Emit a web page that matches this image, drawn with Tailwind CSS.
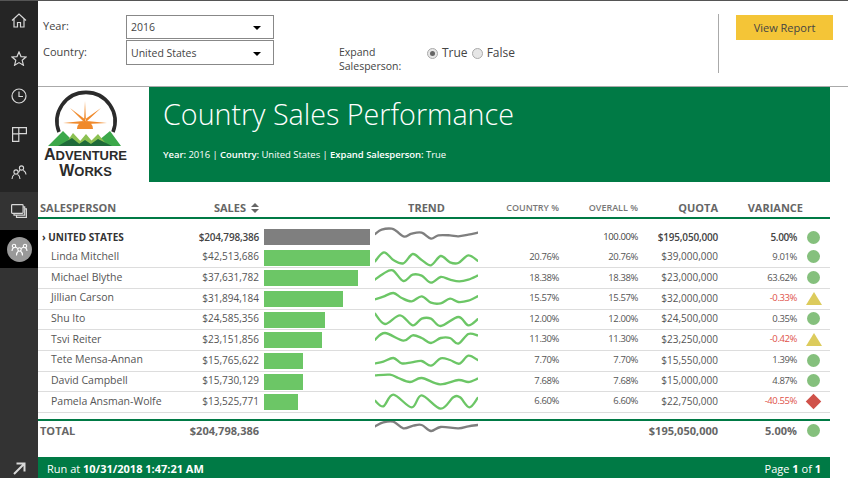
<!DOCTYPE html>
<html lang="en">
<head>
<meta charset="UTF-8">
<title>Country Sales Performance</title>
<script src="https://cdn.jsdelivr.net/npm/@tailwindcss/browser@4"></script>
</head>
<body class="w-[848px] h-[478px] overflow-hidden flex bg-white font-['Open_Sans',sans-serif] text-[#444]">

<!-- left nav -->
<nav class="w-[38px] h-full flex flex-col shrink-0 bg-[#333] text-[#d8d8d8] border-t border-[#555]">
  <div class="bg-[#252525] pb-px">
    <div class="h-[38px] flex items-center justify-center">
      <svg width="16" height="15" viewBox="0 0 16 15" fill="none" stroke="currentColor" stroke-width="1.2"><path d="M1 7.500 8 1l7 6.500M3 6v8h3.500V9.500h3V14H13V6"/></svg>
    </div>
    <div class="h-[38px] flex items-center justify-center">
      <svg width="16" height="15" viewBox="0 0 16 15" fill="none" stroke="currentColor" stroke-width="1.2"><path d="M8 1l2 4.600 5 .4-3.800 3.300 1.200 4.900L8 11.600l-4.400 2.600 1.200-4.900L1 6l5-.4z"/></svg>
    </div>
    <div class="h-[38px] flex items-center justify-center">
      <svg width="16" height="16" viewBox="0 0 16 16" fill="none" stroke="currentColor" stroke-width="1.2"><circle cx="8" cy="8" r="7"/><path d="M8 3.500V8.500H12"/></svg>
    </div>
    <div class="h-[38px] flex items-center justify-center">
      <svg width="15" height="15" viewBox="0 0 15 15" fill="none" stroke="currentColor" stroke-width="1.2"><path d="M.6.6h6.200v6.200H.6zM6.800.6h7.600v6H6.800zM.6 6.800h6.200v7.600H.6z"/></svg>
    </div>
    <div class="h-[38px] flex items-center justify-center">
      <svg width="16" height="15" viewBox="0 0 16 15" fill="none" stroke="currentColor" stroke-width="1.1"><circle cx="5" cy="7" r="2.100"/><circle cx="10.500" cy="3" r="2.100"/><path d="M1 14c0-3 1.500-4 2.400-4.600M6.600 9.400C7.500 10 9 11 9 14M12.300 5.200C13.200 5.800 15 7 15 9.500M7.500 7.500c.5-1 1-1.800 1.400-2.300"/></svg>
    </div>
  </div>
  <div class="h-[38px] flex items-center justify-center">
    <svg width="16" height="14" viewBox="0 0 16 14" fill="none" stroke="currentColor" stroke-width="1.2"><rect x=".6" y=".6" width="11.500" height="8.800" rx=".8"/><path d="M12.100 2.800h1.600v8.300H3V9.400M13.700 4.800h1.700v8.500H5.500v-2.200"/></svg>
  </div>
  <div class="h-[38px] flex items-center justify-center bg-black">
    <div class="w-[25px] h-[25px] rounded-full bg-[#999] flex items-center justify-center">
      <svg width="17" height="13" viewBox="0 0 17 13" fill="none" stroke="white" stroke-width="1.100"><circle cx="3" cy="3" r="1.700"/><circle cx="14" cy="3" r="1.700"/><circle cx="8.500" cy="6.500" r="1.700"/><path d="M4.500 4l2.500 1.600M12.500 4L10 5.600M1 8c0-1.500.6-2.500 1.500-3.200M16 8c0-1.500-.6-2.500-1.500-3.200M5.500 12.500c0-2.500 1-3.800 2-4.500M11.500 12.500c0-2.500-1-3.800-2-4.500"/></svg>
    </div>
  </div>
  <div class="mt-auto h-[17px] flex items-start justify-center">
    <svg width="14" height="14" viewBox="0 0 14 14" fill="none" stroke="currentColor" stroke-width="2"><path d="M2 13 12 3M4.500 2.500h8v8"/></svg>
  </div>
</nav>

<main class="flex-1 flex flex-col min-w-0">

  <!-- parameter bar -->
  <div class="h-[87px] shrink-0 flex border-t border-b border-t-[#555] border-b-[#aaa] text-[11px] text-[#444]">
    <div class="w-[301px] pl-[5px] pt-[13px] grid grid-cols-[83px_148px] grid-rows-[25px_25px] gap-y-px items-center">
      <span>Year:</span>
      <div class="h-[24px] border border-[#888] flex items-center justify-between pl-[4px] pr-[12px] pt-[2px] text-[10.500px]">2016<span class="w-0 h-0 border-x-[4px] border-t-[4px] border-x-transparent border-t-black"></span></div>
      <span>Country:</span>
      <div class="h-[25px] border border-[#888] flex items-center justify-between pl-[4px] pr-[12px] pt-[2px] text-[10.500px]">United States<span class="w-0 h-0 border-x-[4px] border-t-[4px] border-x-transparent border-t-black"></span></div>
    </div>
    <div class="w-[379px] pt-[44px] flex items-start">
      <div class="w-[88px] leading-[14px] text-[10.500px]">Expand<br>Salesperson:</div>
      <div class="flex items-center gap-[4px] text-[12px] leading-[14px] mt-px">
        <span class="w-[11px] h-[11px] rounded-full border border-[#aaa] bg-[#e6e6e6] flex items-center justify-center"><span class="w-[5px] h-[5px] rounded-full bg-[#666]"></span></span>
        <span>True</span>
        <span class="w-[11px] h-[11px] rounded-full border border-[#aaa] bg-[#e6e6e6]"></span>
        <span>False</span>
      </div>
    </div>
    <div class="w-px h-[59px] mt-[13px] bg-[#aaa]"></div>
    <div class="pl-[17px] pt-[14px]">
      <div class="w-[97px] h-[25px] bg-[#f4c537] flex items-center justify-center pt-px text-[#444]">View Report</div>
    </div>
  </div>

  <div class="w-[792px] flex flex-col flex-1 min-h-0">
    <!-- banner -->
    <div class="h-[95px] shrink-0 flex">
      <div class="w-[111px] relative">
        <svg width="111" height="95" viewBox="38 87 111 95" class="absolute inset-0">
          <path d="M59 132A29 29 0 1 1 113 132" fill="none" stroke="#2b2b2b" stroke-width="3.600"/>
          <g fill="#f08a2c">
            <path d="M84 122 85 101 86 122zM84 122 70 108 86 120zM86 122 101 108 84 120zM83 121 63 123 83 124zM87 121 107 123 87 124z"/>
            <path d="M77 129A8 8 0 0 1 93 129z"/>
          </g>
          <path d="M48 146 63 131 78 146zM92 146 110 131 121 146z" fill="#3ca84a"/>
          <path d="M64 146 73 133 85 146zM76 146 86 134 96 146zM86 146 98 134 108 146z" fill="#8cc152"/>
          <path d="M58 146 72 138 82 146zM76 146 85 140 94 146zM88 146 98 139 112 146z" fill="#1f6b3a"/>
        </svg>
        <div class="absolute left-0 w-[95px] top-[60px] text-center text-[#2b2b2b] font-bold font-['Liberation_Sans',sans-serif]">
          <div class="text-[13px] leading-[15px]"><span class="text-[16px] leading-[15px]">A</span>DVENTURE</div>
          <div class="text-[13px] leading-[15px]"><span class="text-[16px] leading-[15px]">W</span>ORKS</div>
        </div>
      </div>
      <div class="flex-1 bg-[#007a45] text-white pl-[14px]">
        <h1 class="text-[28.700px] font-light leading-[40px] mt-[7px]">Country Sales Performance</h1>
        <p class="text-[9.500px] tracking-[-0.050px] mt-[14px] leading-[14px]"><b class="font-semibold">Year:</b> 2016 | <b class="font-semibold">Country:</b> United States | <b class="font-semibold">Expand Salesperson:</b> True</p>
      </div>
    </div>

    <!-- table head -->
    <div class="h-[37px] shrink-0 border-b-2 border-[#007a45] grid grid-cols-[221px_111px_108px_81px_79px_80px_79px_33px] items-end text-right text-[#666] font-bold text-[11px]">
      <div class="flex justify-between pl-[2px] h-[18px] items-center">
        <span>SALESPERSON</span>
        <span class="flex items-center gap-[5px]">SALES
          <span class="flex flex-col gap-[2px]">
            <span class="w-0 h-0 border-x-[4px] border-b-[4px] border-x-transparent border-b-[#666]"></span>
            <span class="w-0 h-0 border-x-[4px] border-t-[4px] border-x-transparent border-t-[#666]"></span>
          </span>
        </span>
      </div>
      <div></div>
      <div class="text-center h-[18px] leading-[18px] pl-[5px]">TREND</div>
      <div class="text-[9px] font-semibold text-[#777] h-[18px] leading-[18px]">COUNTRY %</div>
      <div class="text-[9px] font-semibold text-[#777] h-[18px] leading-[18px]">OVERALL %</div>
      <div class="h-[18px] leading-[18px]">QUOTA</div>
      <div class="h-[18px] leading-[18px] -mr-[6px]">VARIANCE</div>
      <div></div>
    </div>

    <!-- table body -->
    <div class="mt-[8px] flex flex-col text-[10px] text-[#555]">
      <div class="h-[20.670px] grid grid-cols-[221px_111px_108px_81px_79px_80px_79px_33px] items-center text-right font-semibold text-[#444]">
        <div class="flex justify-between pl-[4px]"><span class="font-bold text-[#333]">&rsaquo; UNITED STATES</span><span class="tracking-[-0.200px]">$204,798,386</span></div>
        <div class="pl-[5px] self-start mt-[2px]"><div class="w-[106px] h-[16px] bg-[#7f7f7f]"></div></div>
        <div class="pl-[5px] self-start h-0"><svg class="block" data-spark="12" data-color="#7f7f7f" width="103" height="20" viewBox="0 0 309 60" data-p="15,33 35,20 65,17 80,25 103,41 125,32 155,29 183,47 205,37 240,37 265,40 295,35 323,29"><path fill="none"/></svg></div>
        <div></div>
        <div class="font-normal text-[9.500px] tracking-[-0.400px]">100.00%</div>
        <div class="tracking-[-0.200px]">$195,050,000</div>
        <div class="tracking-[-0.400px]">5.00%</div>
        <div class="flex justify-center"><span class="w-[13px] h-[13px] rounded-full bg-[#85c07d]"></span></div>
      </div>

      <div class="h-[20.670px] pb-px border-b border-[#ddd] grid grid-cols-[221px_111px_108px_81px_79px_80px_79px_33px] items-center text-right">
        <div class="flex justify-between items-center pl-[13px]"><span class="text-[10.500px]">Linda Mitchell</span><span>$42,513,686</span></div>
        <div class="pl-[5px] self-start mt-[2px]"><div class="w-[106px] h-[16px] bg-[#6cc666]"></div></div>
        <div class="pl-[5px] self-start h-0"><svg class="block" data-spark="72" data-color="#6cc666" width="103" height="20" viewBox="0 0 309 60" data-p="15,112 42,85 70,108 100,118 128,90 155,108 183,124 212,96 240,115 265,117 295,94 323,110"><path fill="none"/></svg></div>
        <div class="text-[9.500px] tracking-[-0.400px]">20.76%</div><div class="text-[9.500px] tracking-[-0.400px]">20.76%</div><div>$39,000,000</div><div class="text-[9.500px] tracking-[-0.400px]">9.01%</div>
        <div class="flex justify-center"><span class="w-[13px] h-[13px] rounded-full bg-[#85c07d]"></span></div>
      </div>

      <div class="h-[20.670px] pb-px border-b border-[#ddd] grid grid-cols-[221px_111px_108px_81px_79px_80px_79px_33px] items-center text-right">
        <div class="flex justify-between items-center pl-[13px]"><span class="text-[10.500px]">Michael Blythe</span><span>$37,631,782</span></div>
        <div class="pl-[5px] self-start mt-[2px]"><div class="w-[94px] h-[16px] bg-[#6cc666]"></div></div>
        <div class="pl-[5px] self-start h-0"><svg class="block" data-spark="135" data-color="#6cc666" width="103" height="20" viewBox="0 0 309 60" data-p="15,170 40,152 68,142 100,174 128,155 155,158 183,179 212,162 240,170 268,175 295,170 323,158"><path fill="none"/></svg></div>
        <div class="text-[9.500px] tracking-[-0.400px]">18.38%</div><div class="text-[9.500px] tracking-[-0.400px]">18.38%</div><div>$23,000,000</div><div class="text-[9.500px] tracking-[-0.400px]">63.62%</div>
        <div class="flex justify-center"><span class="w-[13px] h-[13px] rounded-full bg-[#85c07d]"></span></div>
      </div>

      <div class="h-[20.670px] pb-px border-b border-[#ddd] grid grid-cols-[221px_111px_108px_81px_79px_80px_79px_33px] items-center text-right">
        <div class="flex justify-between items-center pl-[13px]"><span class="text-[10.500px]">Jillian Carson</span><span>$31,894,184</span></div>
        <div class="pl-[5px] self-start mt-[2px]"><div class="w-[79px] h-[16px] bg-[#6cc666]"></div></div>
        <div class="pl-[5px] self-start h-0"><svg class="block" data-spark="195" data-color="#6cc666" width="103" height="20" viewBox="0 0 309 60" data-p="15,226 40,218 70,207 95,222 125,232 155,217 183,236 212,238 240,224 265,234 295,230 323,217"><path fill="none"/></svg></div>
        <div class="text-[9.500px] tracking-[-0.400px]">15.57%</div><div class="text-[9.500px] tracking-[-0.400px]">15.57%</div><div>$32,000,000</div><div class="text-[9.500px] tracking-[-0.400px] text-[#e0534a]">-0.33%</div>
        <div class="flex justify-center"><span class="w-0 h-0 border-x-[8px] border-b-[13px] border-x-transparent border-b-[#dccb5c]"></span></div>
      </div>

      <div class="h-[20.670px] pb-px border-b border-[#ddd] grid grid-cols-[221px_111px_108px_81px_79px_80px_79px_33px] items-center text-right">
        <div class="flex justify-between items-center pl-[13px]"><span class="text-[10.500px]">Shu Ito</span><span>$24,585,356</span></div>
        <div class="pl-[5px] self-start mt-[2px]"><div class="w-[61px] h-[16px] bg-[#6cc666]"></div></div>
        <div class="pl-[5px] self-start h-0"><svg class="block" data-spark="-6" data-color="#6cc666" width="103" height="20" viewBox="0 0 309 60" data-p="15,5 45,36 90,10 128,40 155,20 183,20 212,42 265,15 295,40 323,22"><path fill="none"/></svg></div>
        <div class="text-[9.500px] tracking-[-0.400px]">12.00%</div><div class="text-[9.500px] tracking-[-0.400px]">12.00%</div><div>$24,500,000</div><div class="text-[9.500px] tracking-[-0.400px]">0.35%</div>
        <div class="flex justify-center"><span class="w-[13px] h-[13px] rounded-full bg-[#85c07d]"></span></div>
      </div>

      <div class="h-[20.670px] pb-px border-b border-[#ddd] grid grid-cols-[221px_111px_108px_81px_79px_80px_79px_33px] items-center text-right">
        <div class="flex justify-between items-center pl-[13px]"><span class="text-[10.500px]">Tsvi Reiter</span><span>$23,151,856</span></div>
        <div class="pl-[5px] self-start mt-[2px]"><div class="w-[58px] h-[16px] bg-[#6cc666]"></div></div>
        <div class="pl-[5px] self-start h-0"><svg class="block" data-spark="56" data-color="#6cc666" width="103" height="20" viewBox="0 0 309 60" data-p="15,85 45,65 100,88 128,72 155,80 183,95 212,80 240,80 265,97 295,68 323,72"><path fill="none"/></svg></div>
        <div class="text-[9.500px] tracking-[-0.400px]">11.30%</div><div class="text-[9.500px] tracking-[-0.400px]">11.30%</div><div>$23,250,000</div><div class="text-[9.500px] tracking-[-0.400px] text-[#e0534a]">-0.42%</div>
        <div class="flex justify-center"><span class="w-0 h-0 border-x-[8px] border-b-[13px] border-x-transparent border-b-[#dccb5c]"></span></div>
      </div>

      <div class="h-[20.670px] pb-px border-b border-[#ddd] grid grid-cols-[221px_111px_108px_81px_79px_80px_79px_33px] items-center text-right">
        <div class="flex justify-between items-center pl-[13px]"><span class="text-[10.500px]">Tete Mensa-Annan</span><span>$15,765,622</span></div>
        <div class="pl-[5px] self-start mt-[2px]"><div class="w-[39px] h-[16px] bg-[#6cc666]"></div></div>
        <div class="pl-[5px] self-start h-0"><svg class="block" data-spark="118" data-color="#6cc666" width="103" height="20" viewBox="0 0 309 60" data-p="15,155 40,150 70,139 95,155 125,152 155,148 183,162 212,140 240,145 268,156 295,132 323,145"><path fill="none"/></svg></div>
        <div class="text-[9.500px] tracking-[-0.400px]">7.70%</div><div class="text-[9.500px] tracking-[-0.400px]">7.70%</div><div>$15,550,000</div><div class="text-[9.500px] tracking-[-0.400px]">1.39%</div>
        <div class="flex justify-center"><span class="w-[13px] h-[13px] rounded-full bg-[#85c07d]"></span></div>
      </div>

      <div class="h-[20.670px] pb-px border-b border-[#ddd] grid grid-cols-[221px_111px_108px_81px_79px_80px_79px_33px] items-center text-right">
        <div class="flex justify-between items-center pl-[13px]"><span class="text-[10.500px]">David Campbell</span><span>$15,730,129</span></div>
        <div class="pl-[5px] self-start mt-[2px]"><div class="w-[39px] h-[16px] bg-[#6cc666]"></div></div>
        <div class="pl-[5px] self-start h-0"><svg class="block" data-spark="180" data-color="#6cc666" width="103" height="20" viewBox="0 0 309 60" data-p="15,190 60,188 85,198 120,210 155,198 210,217 265,204 295,210 323,200"><path fill="none"/></svg></div>
        <div class="text-[9.500px] tracking-[-0.400px]">7.68%</div><div class="text-[9.500px] tracking-[-0.400px]">7.68%</div><div>$15,000,000</div><div class="text-[9.500px] tracking-[-0.400px]">4.87%</div>
        <div class="flex justify-center"><span class="w-[13px] h-[13px] rounded-full bg-[#85c07d]"></span></div>
      </div>

      <div class="h-[20.670px] pb-px border-b border-[#ddd] grid grid-cols-[221px_111px_108px_81px_79px_80px_79px_33px] items-center text-right">
        <div class="flex justify-between items-center pl-[13px]"><span class="text-[10.500px]">Pamela Ansman-Wolfe</span><span>$13,525,771</span></div>
        <div class="pl-[5px] self-start mt-[2px]"><div class="w-[34px] h-[16px] bg-[#6cc666]"></div></div>
        <div class="pl-[5px] self-start h-0"><svg class="block" data-spark="242" data-color="#6cc666" width="103" height="20" viewBox="0 0 309 60" data-p="15,268 40,285 70,250 125,288 155,252 212,292 250,258 270,258 298,288 323,260"><path fill="none"/></svg></div>
        <div class="text-[9.500px] tracking-[-0.400px]">6.60%</div><div class="text-[9.500px] tracking-[-0.400px]">6.60%</div><div>$22,750,000</div><div class="text-[9.500px] tracking-[-0.400px] text-[#e0534a]">-40.55%</div>
        <div class="flex justify-center"><span class="w-[11px] h-[11px] rotate-45 bg-[#d0524a]"></span></div>
      </div>
    </div>

    <!-- total -->
    <div class="mt-[6px] h-[20px] border-t-2 border-[#007a45] grid grid-cols-[221px_111px_108px_81px_79px_80px_79px_33px] items-center text-right text-[#666] font-bold text-[11px] box-content">
      <div class="flex justify-between pl-[2px]"><span>TOTAL</span><span>$204,798,386</span></div>
      <div></div>
      <div class="pl-[5px] self-start h-0"><svg class="block" data-spark="336" data-color="#7f7f7f" width="103" height="20" viewBox="0 0 309 60" data-p="15,352 40,340 70,338 100,358 130,350 155,348 183,366 212,354 265,358 295,352 323,348"><path fill="none"/></svg></div>
      <div></div><div></div>
      <div>$195,050,000</div>
      <div>5.00%</div>
      <div class="flex justify-center"><span class="w-[13px] h-[13px] rounded-full bg-[#85c07d]"></span></div>
    </div>

    <!-- footer -->
    <div class="mt-auto h-[21px] shrink-0 bg-[#007a45] text-white text-[11px] flex items-center justify-between pl-[9px] pr-[9px] pt-[4px]">
      <span>Run at <b class="font-bold">10/31/2018 1:47:21 AM</b></span>
      <span>Page <b class="font-bold">1</b> of <b class="font-bold">1</b></span>
    </div>
  </div>
</main>

<script>
// catmull-rom through the traced trend points
document.querySelectorAll('svg[data-spark]').forEach(function (svg) {
  var off = +svg.dataset.spark;
  var pts = svg.dataset.p.split(' ').map(function (s) {
    var a = s.split(',');
    return [a[0] - 15, a[1] - off];
  });
  var d = 'M' + pts[0].join(' ');
  for (var i = 0; i < pts.length - 1; i++) {
    var p0 = pts[i - 1] || pts[i], p1 = pts[i], p2 = pts[i + 1], p3 = pts[i + 2] || p2;
    d += 'C' + (p1[0] + (p2[0] - p0[0]) / 6) + ' ' + (p1[1] + (p2[1] - p0[1]) / 6) + ' ' +
      (p2[0] - (p3[0] - p1[0]) / 6) + ' ' + (p2[1] - (p3[1] - p1[1]) / 6) + ' ' + p2[0] + ' ' + p2[1];
  }
  var p = svg.querySelector('path');
  p.setAttribute('d', d);
  p.setAttribute('stroke', svg.dataset.color);
  p.setAttribute('stroke-width', '7');
  p.setAttribute('stroke-linecap', 'round');
});
</script>
</body>
</html>
